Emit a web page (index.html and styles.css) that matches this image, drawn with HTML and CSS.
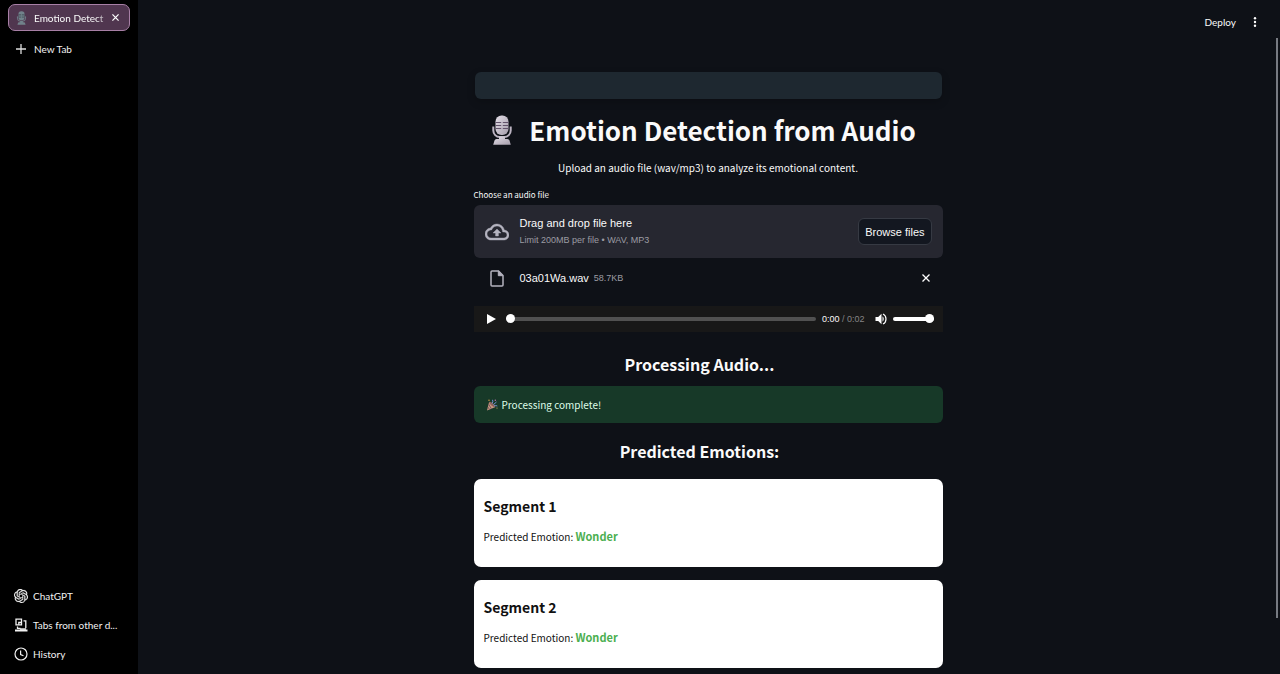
FILE: index.html
```html
<!DOCTYPE html>
<html lang="en">
<head>
<meta charset="utf-8">
<meta name="viewport" content="width=device-width, initial-scale=1">
<title>Emotion Detection from Audio</title>
<link rel="stylesheet" href="styles.css">
</head>
<body>
<svg class="defs" aria-hidden="true">
  <linearGradient id="metal" x1="0" y1="0" x2="1" y2="1">
    <stop offset="0" stop-color="#e4dfe8"/><stop offset="1" stop-color="#a59dab"/>
  </linearGradient>
  <symbol id="mic" viewBox="0 0 20 30">
    <path class="mic-stand" d="M1.300 11.500v4a6.500 6.500 0 0 0 6.500 6.500h4.400a6.500 6.500 0 0 0 6.500-6.500v-4" fill="none" stroke-width="2"/>
    <path class="mic-body" d="M7 21.500h6v2.500h2.500q1.500 0 2 1.500l1.300 4.200H1.200l1.300-4.200q.5-1.500 2-1.500H7z"/>
    <rect class="mic-body" x="3.500" y="0.500" width="13" height="19.500" rx="6"/>
    <path class="mic-lines" d="M3.500 7.500h5.700M10.800 7.500h5.700M3.500 10.500h5.700M10.800 10.500h5.700M3.500 13.500h5.700M10.800 13.500h5.700" stroke-width="1.200"/>
  </symbol>
</svg>
<div class="window">
  <aside class="tabs">
    <div class="tab">
      <svg class="tab-mic" aria-hidden="true"><use href="#mic"/></svg>
      <span class="tab-title">Emotion Detect</span>
      <button class="icon-button" aria-label="Close tab"><svg width="7" height="7" viewBox="0 0 8 8" fill="none" stroke="#fff" stroke-width="1.400"><path d="M.5.5l7 7M7.500.5l-7 7"/></svg></button>
    </div>
    <button class="side-item new-tab">
      <svg width="14" height="14" viewBox="0 0 14 14" fill="none" stroke="#ddd" stroke-width="1.300"><path d="M7 2v10M2 7h10"/></svg>
      New Tab
    </button>
    <nav class="side-nav">
      <a class="side-item" href="#chat">
        <svg width="14" height="14" viewBox="0 0 24 24" fill="#f2f2f2" stroke="#f2f2f2" stroke-width=".4"><path d="M22.282 9.821a5.985 5.985 0 0 0-.516-4.910 6.046 6.046 0 0 0-6.510-2.900A6.065 6.065 0 0 0 4.981 4.182a5.985 5.985 0 0 0-3.998 2.900 6.046 6.046 0 0 0 .743 7.097 5.980 5.980 0 0 0 .511 4.911 6.051 6.051 0 0 0 6.515 2.900A5.985 5.985 0 0 0 13.260 24a6.056 6.056 0 0 0 5.772-4.206 5.990 5.990 0 0 0 3.998-2.900 6.056 6.056 0 0 0-.748-7.073zM13.260 22.430a4.476 4.476 0 0 1-2.876-1.041l.141-.080 4.779-2.758a.795.795 0 0 0 .392-.681v-6.737l2.020 1.169a.071.071 0 0 1 .038.052v5.583a4.504 4.504 0 0 1-4.494 4.493zM3.600 18.304a4.471 4.471 0 0 1-.535-3.014l.142.085 4.783 2.759a.771.771 0 0 0 .781 0l5.843-3.369v2.332a.080.080 0 0 1-.033.062L9.740 19.950a4.499 4.499 0 0 1-6.140-1.646zM2.341 7.896a4.485 4.485 0 0 1 2.366-1.973V11.600a.766.766 0 0 0 .388.677l5.814 3.354-2.020 1.169a.076.076 0 0 1-.071 0l-4.830-2.787A4.504 4.504 0 0 1 2.341 7.872zm16.597 3.855l-5.833-3.387L15.119 7.200a.076.076 0 0 1 .071 0l4.830 2.791a4.494 4.494 0 0 1-.676 8.105v-5.678a.790.790 0 0 0-.407-.667zm2.010-3.023l-.141-.085-4.774-2.782a.776.776 0 0 0-.785 0L9.409 9.230V6.897a.066.066 0 0 1 .028-.061l4.830-2.787a4.499 4.499 0 0 1 6.680 4.660zm-12.640 4.135l-2.020-1.164a.080.080 0 0 1-.038-.057V6.075a4.499 4.499 0 0 1 7.375-3.453l-.142.080L8.704 5.460a.795.795 0 0 0-.393.681zm1.097-2.365l2.602-1.500 2.607 1.500v2.999l-2.597 1.500-2.607-1.500z"/></svg>
        ChatGPT
      </a>
      <a class="side-item" href="#devices">
        <svg width="14" height="14" viewBox="0 0 14 14" fill="none" stroke="#f2f2f2" stroke-width="1.300"><path d="M2 1.200h5.500v5.600H2z"/><path d="M4.800 6.800V4.500h2.700"/><path d="M9.500 2.800h2.300v7.400M3.500 8.500v1.800h3"/><path d="M1 12.500h12.500" stroke-width="2"/><path d="M6 10.300h6v1.500H6z" fill="#f2f2f2" stroke="none"/></svg>
        <span>Tabs from other d...</span>
      </a>
      <a class="side-item" href="#history">
        <svg width="14" height="14" viewBox="0 0 14 14" fill="none" stroke="#f2f2f2" stroke-width="1.200"><circle cx="7" cy="7" r="6"/><path d="M6.600 3.500v4l2.900 1.300"/></svg>
        History
      </a>
    </nav>
  </aside>

  <div class="page">
    <header class="toolbar">
      <button class="deploy">Deploy</button>
      <button class="icon-button" aria-label="Menu"><svg width="4" height="10" viewBox="0 0 4 10" fill="#fff"><circle cx="2" cy="1.300" r="1.200"/><circle cx="2" cy="5" r="1.200"/><circle cx="2" cy="8.700" r="1.200"/></svg></button>
    </header>
    <main class="content">
      <div class="banner"></div>
      <h1 class="title"><svg class="title-mic" role="img" aria-label="Microphone"><use href="#mic"/></svg>Emotion Detection from Audio</h1>
      <p class="intro">Upload an audio file (wav/mp3) to analyze its emotional content.</p>

      <p class="label" id="upload-label">Choose an audio file</p>
      <section class="dropzone" aria-labelledby="upload-label">
        <svg class="cloud" width="24" height="24" viewBox="0 0 24 24" fill="#b4b3bf" stroke="#b4b3bf" stroke-width=".4"><path d="M19.350 10.040A7.490 7.490 0 0 0 12 4C9.110 4 6.600 5.640 5.350 8.040A5.994 5.994 0 0 0 0 14c0 3.310 2.690 6 6 6h13c2.760 0 5-2.240 5-5 0-2.640-2.050-4.780-4.650-4.960zM19 18H6c-2.210 0-4-1.790-4-4 0-2.050 1.530-3.760 3.560-3.970l1.070-.110.500-.950A5.469 5.469 0 0 1 12 6c2.620 0 4.880 1.860 5.390 4.430l.300 1.500 1.530.110A2.980 2.980 0 0 1 22 15c0 1.650-1.350 3-3 3zM8 13h2.550v3h2.900v-3H16l-4-4z"/></svg>
        <div class="drop-text">
          <span class="drop-main">Drag and drop file here</span>
          <span class="muted">Limit 200MB per file • WAV, MP3</span>
        </div>
        <button class="browse">Browse files</button>
      </section>
      <div class="file">
        <svg width="14" height="17" viewBox="0 0 14 17" fill="none" stroke="#b4b3bf" stroke-width="1.500"><path d="M2 1h6.500L13 5.500V15a1 1 0 0 1-1 1H2a1 1 0 0 1-1-1V2a1 1 0 0 1 1-1z"/><path d="M8.300 1v4.700H13z" fill="#b4b3bf" stroke-width="1"/></svg>
        <span class="file-name">03a01Wa.wav</span>
        <span class="muted">58.7KB</span>
        <button class="icon-button remove" aria-label="Remove file"><svg width="8" height="8" viewBox="0 0 8 8" fill="none" stroke="#fff" stroke-width="1.300"><path d="M.5.5l7 7M7.500.5l-7 7"/></svg></button>
      </div>

      <div class="player">
        <button class="icon-button" aria-label="Play"><svg width="10" height="10" viewBox="0 0 10 10" fill="#fff"><path d="M1 0l9 5-9 5z"/></svg></button>
        <input class="range seek" type="range" min="0" max="100" value="0" aria-label="Seek">
        <span class="time">0:00 <span class="total">/ 0:02</span></span>
        <button class="icon-button" aria-label="Mute"><svg width="12" height="12" viewBox="0 0 12 12" fill="#fff"><path d="M.5 4h2.700L6.500.8v10.400L3.200 8H.5z"/><path d="M7.500 3.200c1.700 1.300 1.700 4.300 0 5.600z"/><path d="M8 1c4 1.800 4 8.200 0 10" fill="none" stroke="#fff" stroke-width="1.200"/></svg></button>
        <input class="range volume" type="range" min="0" max="100" value="100" aria-label="Volume">
      </div>

      <h2 class="heading">Processing Audio...</h2>
      <div class="success" role="status">
        <svg width="12" height="12" viewBox="0 0 12 12"><path d="M3.200 2.700l6.300 5.200L1 11.500z" fill="#c99a80"/><path d="M2.500 5l3 5M1.800 8l2 2.800" stroke="#77555f" stroke-width="1"/><ellipse cx="6.300" cy="5.400" rx="1.300" ry="3.800" transform="rotate(-50 6.300 5.400)" fill="#8d6259"/><path d="M6 4.500Q7.500 3 6.500.8M7.500 5.500L10.500 3M8 7q1.500-1 3.300 0" stroke="#6d91d0" stroke-width="1" fill="none"/><circle cx="3" cy="1.300" r=".7" fill="#e0a24d"/><circle cx="9.300" cy="1.200" r=".7" fill="#c474b0"/><circle cx="11" cy="9" r=".6" fill="#dca85c"/></svg>
        Processing complete!
      </div>
      <h2 class="heading predicted">Predicted Emotions:</h2>

      <article class="card">
        <h3 class="card-title">Segment 1</h3>
        <p class="card-text">Predicted Emotion: <strong class="emotion">Wonder</strong></p>
      </article>
      <article class="card">
        <h3 class="card-title">Segment 2</h3>
        <p class="card-text">Predicted Emotion: <strong class="emotion">Wonder</strong></p>
      </article>
    </main>
    <div class="scroll-thumb"></div>
  </div>
</div>
</body>
</html>
```
FILE: styles.css
```css
* { box-sizing: border-box; }
body {
  margin: 0;
  background: #0e1117;
  color: #fafafa;
  font-family: "Noto Sans CJK SC", "Noto Sans", sans-serif;
  font-size: 10px;
  line-height: 16px;
}
h1, h2, h3, p { margin: 0; }
button { font: inherit; color: inherit; background: none; border: 0; padding: 0; }
svg { display: block; flex: none; }
.defs { position: absolute; width: 0; height: 0; }
.window { display: flex; min-height: 100vh; }

.tabs {
  flex: none;
  width: 138px;
  padding: 4px 8px 6px;
  display: flex;
  flex-direction: column;
  background: #000;
  font-family: Lato, "Open Sans", sans-serif;
}
.tab {
  display: flex;
  align-items: center;
  height: 27px;
  padding: 0 10px 0 7px;
  border: 1px solid #a77fa5;
  border-radius: 7px;
  background: #50364f;
}
.tab-mic { width: 11px; height: 14px; margin-right: 7px; }
.tab-mic, .tab-mic * { --mic: #71828b; --mic-line: #3b4750; }
.tab-title {
  flex: 1;
  white-space: nowrap;
  mask-image: linear-gradient(to right, #000 80%, transparent);
}
.mic-body { fill: var(--mic, url(#metal)); }
.mic-stand { stroke: var(--mic, #bcb4c2); }
.mic-lines { stroke: var(--mic-line, #62536b); }
.icon-button { flex: none; }
.side-item {
  display: flex;
  align-items: center;
  gap: 5px;
  height: 29px;
  padding-left: 6px;
  color: #f2f2f2;
  text-decoration: none;
  text-align: left;
  white-space: nowrap;
}
.new-tab { margin-top: 3px; gap: 6px; }
.side-nav { margin-top: auto; }

.page { position: relative; flex: 1; min-width: 0; padding-right: 2px; }
.toolbar {
  display: flex;
  justify-content: flex-end;
  align-items: center;
  gap: 17px;
  height: 44px;
  padding-right: 21px;
  font-family: Lato, Roboto, sans-serif;
}
.content { width: 100%; max-width: 469px; margin: 0 auto; padding: 28px 0 6px; }
.banner {
  height: 27px;
  margin: 0 1px;
  border-radius: 6px;
  background: #1e2830;
  box-shadow: 0 3px 8px rgba(0, 0, 0, .2);
}
.title {
  display: flex;
  justify-content: center;
  align-items: center;
  gap: 17px;
  height: 36px;
  margin-top: 13px;
  padding-right: 8px;
  font-size: 26px;
  line-height: 36px;
  white-space: nowrap;
}
.title-mic { width: 20px; height: 30px; }
.intro { margin-top: 12px; text-align: center; }
.label { margin-top: 11px; margin-bottom: 2px; font-size: 8px; }
.dropzone, .file, .player, .browse { font-family: "Liberation Sans", Arial, sans-serif; }
.dropzone {
  display: flex;
  align-items: center;
  min-height: 53px;
  padding: 0 11px;
  border-radius: 6px;
  background: #262730;
}
.drop-text { display: flex; flex-direction: column; flex: 1; margin-left: 11px; line-height: 17px; }
.drop-main, .file-name, .browse { font-size: 11px; }
.muted { color: #9c9ca3; font-size: 9px; }
.browse {
  height: 27px;
  padding: 0 6px;
  border: 1px solid #363a43;
  border-radius: 6px;
  background: #131720;
}
.file { display: flex; align-items: center; height: 40px; padding: 0 13px 0 16px; }
.file-name { margin: 0 5px 0 16px; }
.remove { margin-left: auto; }
.player {
  display: flex;
  align-items: center;
  height: 26px;
  margin-top: 8px;
  padding: 0 9px 0 12px;
  background: #181818;
}
.range { appearance: none; min-width: 0; height: 10px; margin: 0; background: none; }
.range::-webkit-slider-runnable-track { height: 4px; border-radius: 2px; background: #515151; }
.range::-webkit-slider-thumb {
  appearance: none;
  width: 9px;
  height: 9px;
  margin-top: -3px;
  border-radius: 50%;
  background: #fff;
}
.seek { flex: 1; margin: 0 6px 0 10px; }
.time { margin-right: 10px; font-size: 9px; }
.total { color: #858585; }
.volume { width: 41px; margin-left: 6px; }
.volume::-webkit-slider-runnable-track { background: #fff; }

.heading {
  margin-top: 19px;
  padding-right: 17px;
  font-size: 16px;
  line-height: 26px;
  text-align: center;
}
.success {
  display: flex;
  align-items: center;
  gap: 4px;
  height: 37px;
  margin-top: 9px;
  padding: 0 12px;
  border-radius: 6px;
  background: #173928;
  color: #dffde9;
}
.predicted { margin-top: 15px; margin-bottom: 15px; }
.card {
  height: 88px;
  padding: 15px 10px;
  border-radius: 7px;
  background: #fff;
  color: #111;
}
.card + .card { margin-top: 13px; }
.card-title { font-size: 14px; line-height: 24px; }
.card-text { margin-top: 10px; }
.emotion { color: #4caf50; font-size: 11px; }
.scroll-thumb {
  position: absolute;
  top: 38px;
  right: 2px;
  width: 2px;
  height: 86%;
  background: #777b82;
}
```
